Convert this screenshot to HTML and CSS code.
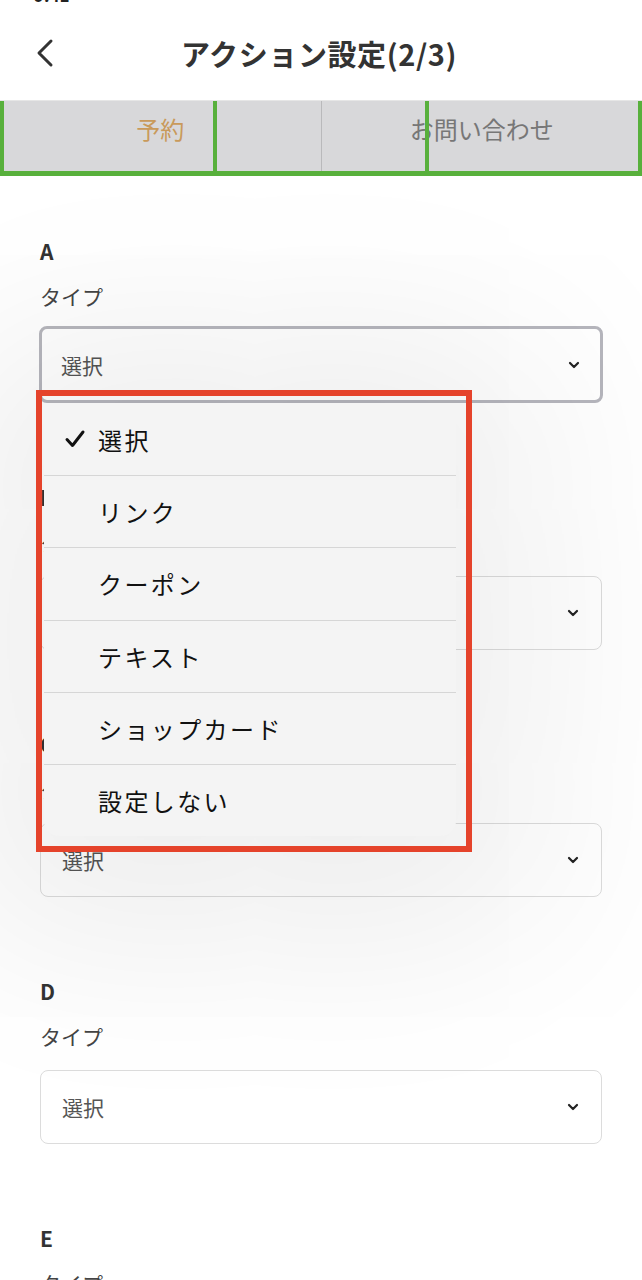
FILE: index.html
```html
<!DOCTYPE html>
<html lang="ja">
<head>
<meta charset="utf-8">
<title>アクション設定(2/3)</title>
<link rel="stylesheet" href="styles.css">
</head>
<body>
<div class="page">
  <div class="status"><span class="status-time">9:41</span></div>
  <header class="header">
    <button class="back" aria-label="戻る">
      <svg width="22" height="30" viewBox="0 0 22 30"><path d="M17 3 L5 15 L17 27" fill="none" stroke="#333" stroke-width="3" stroke-linecap="round" stroke-linejoin="round"/></svg>
    </button>
    <h1 class="title">アクション設定(2/3)</h1>
    <span class="header-spacer"></span>
  </header>

  <nav class="tabs">
    <div class="tab tab-active">予約</div>
    <div class="tab">お問い合わせ</div>
    <div class="tab-guides">
      <span class="guide"></span><span class="guide"></span><span class="guide guide-last"></span>
    </div>
  </nav>

  <main class="form">
    <section class="field">
      <div class="field-key">A</div>
      <div class="field-label">タイプ</div>
      <div class="select select-focus"><span class="select-value">選択</span><svg class="chev" width="12" height="8" viewBox="0 0 12 8"><path d="M2 2 L6 6 L10 2" fill="none" stroke="#222" stroke-width="2.2" stroke-linecap="round" stroke-linejoin="round"/></svg></div>
    </section>
    <section class="field">
      <div class="field-key">B</div>
      <div class="field-label">タイプ</div>
      <div class="select"><span class="select-value">選択</span><svg class="chev" width="12" height="8" viewBox="0 0 12 8"><path d="M2 2 L6 6 L10 2" fill="none" stroke="#222" stroke-width="2.2" stroke-linecap="round" stroke-linejoin="round"/></svg></div>
    </section>
    <section class="field">
      <div class="field-key">C</div>
      <div class="field-label">タイプ</div>
      <div class="select"><span class="select-value">選択</span><svg class="chev" width="12" height="8" viewBox="0 0 12 8"><path d="M2 2 L6 6 L10 2" fill="none" stroke="#222" stroke-width="2.2" stroke-linecap="round" stroke-linejoin="round"/></svg></div>
    </section>
    <section class="field">
      <div class="field-key">D</div>
      <div class="field-label">タイプ</div>
      <div class="select"><span class="select-value">選択</span><svg class="chev" width="12" height="8" viewBox="0 0 12 8"><path d="M2 2 L6 6 L10 2" fill="none" stroke="#222" stroke-width="2.2" stroke-linecap="round" stroke-linejoin="round"/></svg></div>
    </section>
    <section class="field">
      <div class="field-key">E</div>
      <div class="field-label">タイプ</div>
      <div class="select"><span class="select-value">選択</span><svg class="chev" width="12" height="8" viewBox="0 0 12 8"><path d="M2 2 L6 6 L10 2" fill="none" stroke="#222" stroke-width="2.2" stroke-linecap="round" stroke-linejoin="round"/></svg></div>
    </section>
  </main>

  <ul class="menu">
    <li class="menu-item"><span class="check"><svg width="22" height="20" viewBox="0 0 22 20"><path d="M3 10.5 L8.5 16.5 L19 3" fill="none" stroke="#111" stroke-width="3" stroke-linecap="round" stroke-linejoin="round"/></svg></span>選択</li>
    <li class="menu-item"><span class="check"></span>リンク</li>
    <li class="menu-item"><span class="check"></span>クーポン</li>
    <li class="menu-item"><span class="check"></span>テキスト</li>
    <li class="menu-item"><span class="check"></span>ショップカード</li>
    <li class="menu-item"><span class="check"></span>設定しない</li>
  </ul>
  <div class="highlight"></div>
</div>
</body>
</html>
```

FILE: styles.css
```css
* { box-sizing: border-box; }
html, body {
  margin: 0;
  padding: 0;
  background: #ffffff;
}
body {
  font-family: "Noto Sans CJK JP", "Noto Sans", sans-serif;
  color: #333;
  width: 642px;
  height: 1280px;
  overflow: hidden;
}
.page {
  position: relative;
  width: 642px;
  height: 1280px;
  overflow: hidden;
}
.status {
  height: 6px;
  overflow: hidden;
  padding-left: 34px;
}
.status-time {
  display: block;
  font-size: 17px;
  font-weight: 700;
  line-height: 17px;
  margin-top: -14px;
  color: #222;
}
.header {
  height: 94px;
  display: flex;
  align-items: center;
  padding: 0 28px 0 28px;
}
.back {
  width: 40px;
  height: 40px;
  border: 0;
  background: none;
  padding: 0;
  display: flex;
  align-items: center;
  justify-content: flex-start;
  margin-left: 6px;
}
.title {
  flex: 1;
  margin: 0;
  text-align: center;
  font-size: 29px;
  font-weight: 700;
  color: #333;
  letter-spacing: 0.6px;
  padding-right: 4px;
}
.header-spacer { width: 46px; }

.tabs {
  position: relative;
  height: 76px;
  display: flex;
  background: #d8d8da;
  border-top: 1px solid #e6e6e6;
}
.tab {
  flex: 1;
  display: flex;
  align-items: center;
  justify-content: center;
  font-size: 24px;
  color: #777;
  padding-bottom: 21px;
}
.tab + .tab { border-left: 1px solid #b9b9bb; margin-bottom: 5px; padding-bottom: 16px; }
.tab-active { color: #c99a5b; }
.tab-guides {
  position: absolute;
  inset: 0;
  display: flex;
}
.guide {
  flex: 1;
  border-left: 4px solid #58b03c;
  border-bottom: 5px solid #58b03c;
}
.guide-last { border-right: 4px solid #58b03c; }

.form {
  padding: 63px 40px 0 40px;
}
.field {
  display: flex;
  flex-direction: column;
  padding-bottom: 82px;
}
.field-key {
  font-size: 21px;
  font-weight: 700;
  line-height: 24px;
  color: #333;
}
.field-label {
  margin-top: 18px;
  font-size: 21px;
  line-height: 30px;
  color: #444;
}
.select {
  margin-top: 19px;
  height: 74px;
  border: 1.5px solid #dcdcdc;
  border-radius: 8px;
  display: flex;
  align-items: center;
  justify-content: space-between;
  padding: 0 22px 0 21px;
  background: #fff;
}
.select-focus {
  border: 3px solid #b6b6bd;
  padding: 0 20px 0 19px;
  width: 564px;
  height: 77px;
  margin-top: 15px;
  margin-left: -1px;
}
.select-value {
  font-size: 21px;
  color: #555;
}
.chev { display: block; }

.menu {
  position: absolute;
  left: 44px;
  top: 403px;
  width: 412px;
  height: 433px;
  margin: 0;
  padding: 0;
  list-style: none;
  background: #f4f4f4;
  border-radius: 15px;
  box-shadow: 0 20px 200px 90px rgba(0, 0, 0, 0.07);
  overflow: hidden;
}
.menu-item {
  height: 72.2px;
  display: flex;
  align-items: center;
  font-size: 24px;
  letter-spacing: 2.4px;
  color: #111;
  border-top: 1px solid #d6d6d6;
}
.menu-item:first-child { border-top: 0; }
.check {
  width: 54px;
  padding-left: 20px;
  display: flex;
  align-items: center;
}
.highlight {
  position: absolute;
  left: 36px;
  top: 390px;
  width: 436px;
  height: 462px;
  border: 6px solid #e5432b;
}
```
